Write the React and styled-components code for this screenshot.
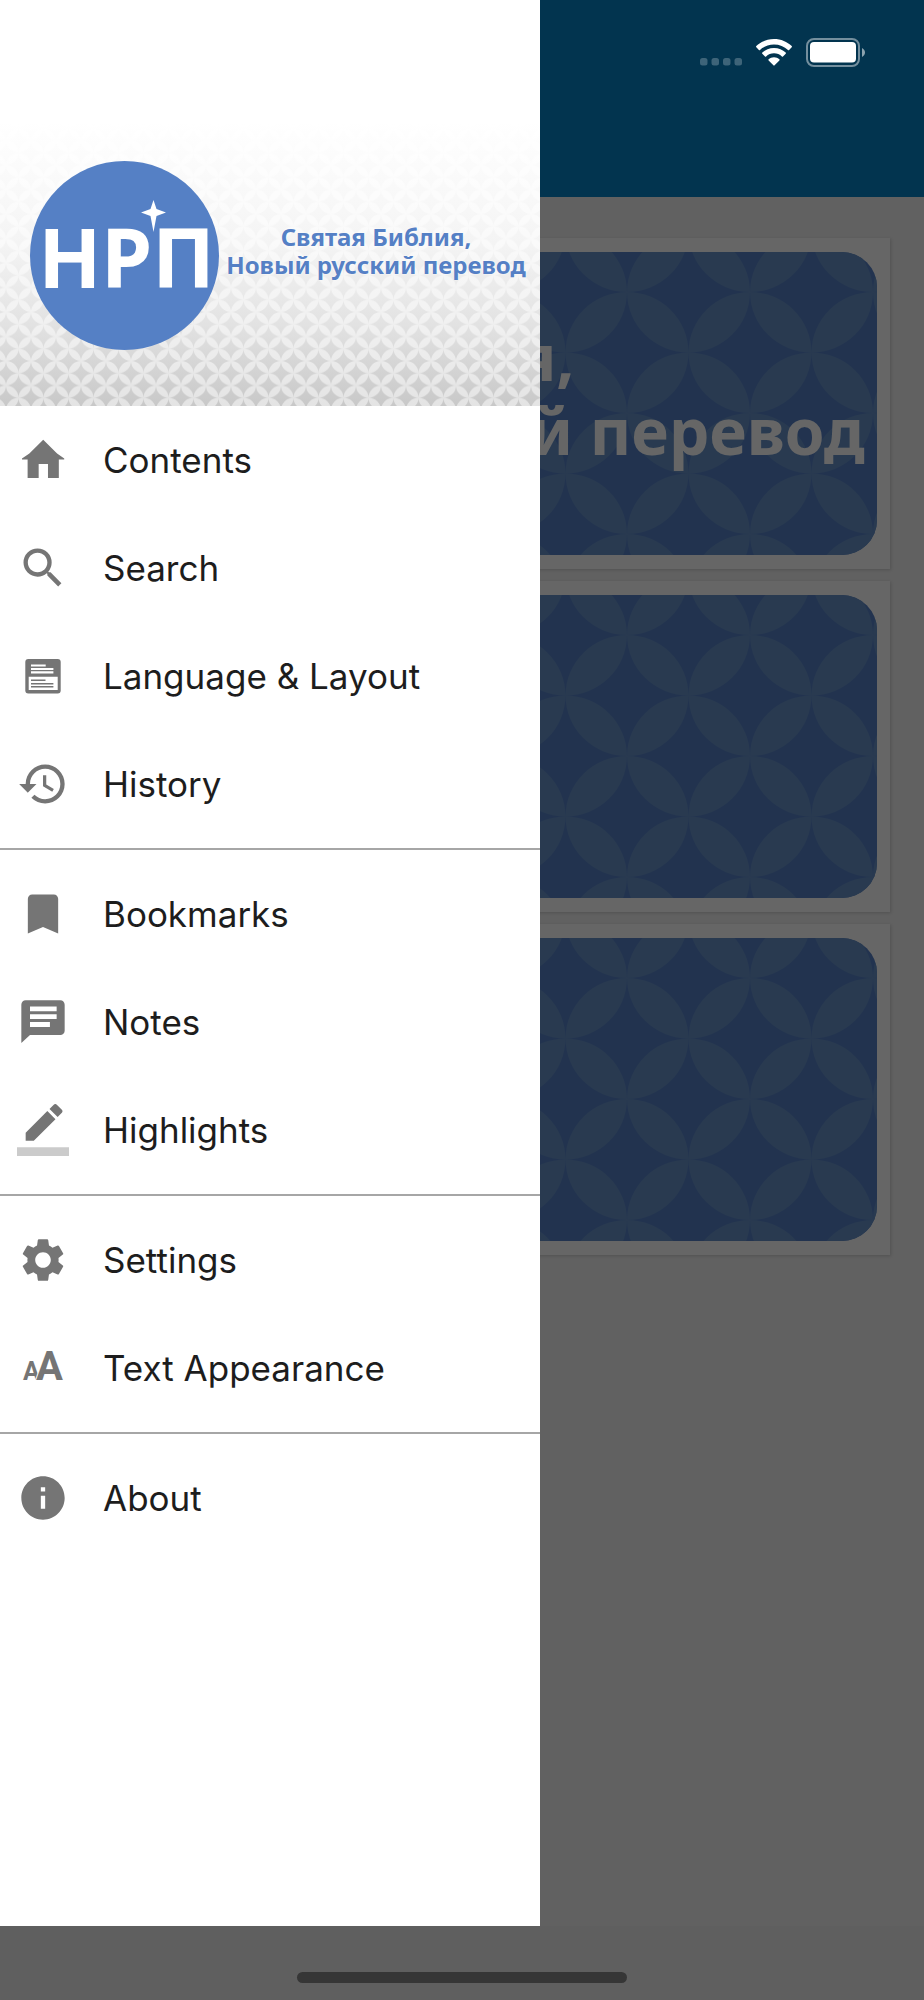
import React from "react";
import styled, { createGlobalStyle } from "styled-components";
import {
  MdBookmark,
  MdHistory,
  MdInfo,
  MdSearch,
  MdSettings,
} from "react-icons/md";

const color_brand = "#5580c5";
const color_icon = "#757575";
const font_ui = `Inter, Roboto, "Liberation Sans", sans-serif`;
const font_title = `"Noto Sans", "Open Sans", sans-serif`;

const GlobalStyle = createGlobalStyle`
  *, *::before, *::after {
    box-sizing: border-box;
  }

  body {
    margin: 0;
    font-family: ${font_ui};
  }
`;

const Screen = styled.div`
  position: relative;
  display: flex;
  flex-direction: column;
  min-height: 100vh;
  overflow: hidden;
  background-color: #f2f2f2;
`;

const AppHeader = styled.header`
  height: 197px;
  background-color: #0582c6;
`;

const StatusBar = styled.div`
  position: relative;
  z-index: 2;
  display: flex;
  justify-content: flex-end;
  align-items: flex-end;
  gap: 14px;
  padding: 38px 58px 0 0;
`;

const Shelf = styled.main`
  flex: 1;
  display: flex;
  flex-direction: column;
  gap: 12px;
  padding: 41px 34px;
`;

const Card = styled.article`
  padding: 14px 13px;
  background-color: #fff;
  box-shadow: 1px 1px 3px rgba(0, 0, 0, 0.16);
`;

const Cover = styled.div`
  position: relative;
  display: flex;
  align-items: center;
  height: 303px;
  padding: 0 0 20px 19px;
  border-radius: 35px;
  overflow: hidden;
  background-color: ${color_brand};
`;

const CoverTitle = styled.h2`
  position: relative;
  margin: 0;
  color: #fff;
  font-family: ${font_title};
  font-size: 64px;
  font-weight: 700;
  line-height: 74px;
  white-space: nowrap;
`;

const PatternLayer = styled.svg`
  position: absolute;
  inset: 0;
  width: 100%;
  height: 100%;
`;

const HomeArea = styled.footer`
  display: flex;
  justify-content: center;
  height: 74px;
  padding-top: 46px;
  background-color: #eee;
`;

const HomeIndicator = styled.div`
  width: 330px;
  height: 11px;
  border-radius: 6px;
  background-color: #878787;
`;

const Scrim = styled.div`
  position: absolute;
  inset: 0;
  z-index: 1;
  background-color: rgba(0, 0, 0, 0.6);
`;

const Drawer = styled.aside`
  position: absolute;
  top: 0;
  bottom: 74px;
  left: 0;
  z-index: 3;
  width: 540px;
  max-width: 85vw;
  background-color: #fff;
`;

const Banner = styled.div`
  position: relative;
  display: flex;
  align-items: center;
  padding: 161px 7px 56px 30px;
  background: linear-gradient(
    to bottom,
    #fff 30%,
    #f4f4f4 60%,
    #e2e2e2 80%,
    #c8c8c8 100%
  );
`;

const Logo = styled.div`
  position: relative;
  flex-shrink: 0;
  display: flex;
  align-items: center;
  justify-content: center;
  width: 189px;
  height: 189px;
  padding-left: 4px;
  border-radius: 50%;
  background-color: ${color_brand};
  color: #fff;
  font-family: ${font_title};
  font-size: 82px;
  font-weight: 700;
`;

const LogoStar = styled.svg`
  position: absolute;
  top: 39px;
  left: 111px;
  width: 25px;
  height: 32px;
  fill: #fff;
`;

const BannerTitle = styled.h1`
  position: relative;
  flex: 1;
  margin: 0;
  padding-bottom: 10px;
  color: ${color_brand};
  font-family: ${font_title};
  font-size: 24px;
  font-weight: 700;
  line-height: 28px;
  text-align: center;
  text-shadow: 0 0 2px #fff;
  white-space: nowrap;
`;

const MenuGroup = styled.ul`
  margin: 0;
  padding: 0 0 10px;
  list-style: none;

  & + & {
    padding-top: 10px;
    border-top: 2px solid #a6a6a6;
  }
`;

const MenuButton = styled.button`
  display: flex;
  align-items: center;
  gap: 34px;
  width: 100%;
  height: 108px;
  padding: 0 17px;
  border: 0;
  background: none;
  color: #1d1d1d;
  font-family: ${font_ui};
  font-size: 35px;
  text-align: left;
  cursor: pointer;

  svg {
    flex-shrink: 0;
    width: 52px;
    height: 52px;
    fill: ${color_icon};
  }
`;

// interlocking petals, one tile holds four of them around its center
const Petals = ({ id, width, height, x, y, fill, opacity }) => {
  const rx = width / 2;
  const ry = height / 2;
  const petal = (x1, y1, x2, y2) =>
    `M${x1} ${y1}A${rx} ${ry} 0 0 1 ${x2} ${y2}A${rx} ${ry} 0 0 1 ${x1} ${y1}Z`;

  return (
    <PatternLayer aria-hidden="true">
      <defs>
        <pattern
          id={id}
          x={x}
          y={y}
          width={width}
          height={height}
          patternUnits="userSpaceOnUse"
        >
          <path
            fill={fill}
            fillOpacity={opacity}
            d={
              petal(0, 0, rx, ry) +
              petal(width, 0, rx, ry) +
              petal(0, height, rx, ry) +
              petal(width, height, rx, ry)
            }
          />
        </pattern>
      </defs>
      <rect width="100%" height="100%" fill={`url(#${id})`} />
    </PatternLayer>
  );
};

const SignalIcon = () => (
  <svg width="42" height="28" fill="#fff" fillOpacity="0.24" aria-hidden="true">
    <rect x="0" y="19" width="7.500" height="7.500" rx="2.500" />
    <rect x="11.500" y="19" width="7.500" height="7.500" rx="2.500" />
    <rect x="23" y="19" width="7.500" height="7.500" rx="2.500" />
    <rect x="34.500" y="19" width="7.500" height="7.500" rx="2.500" />
  </svg>
);

const WifiIcon = () => (
  <svg width="36" height="28" viewBox="0 0 36 28" fill="#fff" aria-hidden="true">
    <path d="M18 0C11 0 4.800 2.700.3 7.100a.8.8 0 0 0 0 1.100l2.600 2.700a.8.800 0 0 0 1.100 0C7.700 7.400 12.600 5.400 18 5.400s10.300 2 14 5.500a.8.8 0 0 0 1.100 0l2.600-2.700a.8.8 0 0 0 0-1.100C31.200 2.700 25 0 18 0Z" />
    <path d="M18 9c-4.600 0-8.700 1.700-11.700 4.600a.8.8 0 0 0 0 1.100l2.700 2.700a.8.8 0 0 0 1.100 0c2.100-1.900 4.900-3.100 7.900-3.100s5.800 1.200 7.900 3.100a.8.8 0 0 0 1.100 0l2.700-2.700a.8.8 0 0 0 0-1.100C26.700 10.700 22.600 9 18 9Z" />
    <path d="M18 18.300c-2.100 0-4 .7-5.400 2a.8.8 0 0 0 0 1.100l4.800 4.900a.8.8 0 0 0 1.200 0l4.800-4.900a.8.8 0 0 0 0-1.100c-1.400-1.300-3.300-2-5.400-2Z" />
  </svg>
);

const BatteryIcon = () => (
  <svg width="60" height="29" viewBox="0 0 60 29" aria-hidden="true">
    <rect
      x="1"
      y="1"
      width="52"
      height="27"
      rx="7"
      fill="none"
      stroke="#fff"
      strokeOpacity="0.45"
      strokeWidth="2"
    />
    <rect x="4" y="4" width="46" height="20.500" rx="4" fill="#fff" />
    <path d="M56 10c4 2 4 7 0 9Z" fill="#fff" fillOpacity="0.55" />
  </svg>
);

const HomeIcon = () => (
  <svg viewBox="0 0 24 24" aria-hidden="true">
    <path d="M12.100 2.700 18.500 9l3.300 2.300v.5h-2.500v8.500h-5v-6.500H10v6.500H4.900v-8.500H2.300v-.5L5.700 9Z" />
  </svg>
);

const LayoutIcon = () => (
  <svg viewBox="0 0 52 52" aria-hidden="true">
    <rect x="8.300" y="9" width="35.400" height="34.400" rx="3" />
    <path
      fill="#fff"
      d="M14 14.500h14.700v2H14zM14 18h22.400v2H14zM14 21.300h22.400v2.200H14zM11.700 26.700h29V40h-29z"
    />
    <path d="M14 29.500h14.500v1.500H14zM14 33h22.400v1.500H14zM14 36h22.400v1.500H14z" />
  </svg>
);

const NotesIcon = () => (
  <svg viewBox="0 0 24 24" aria-hidden="true">
    <path d="M20 2H4c-1.100 0-2 .9-2 2v17.700L6 18h14c1.100 0 2-.9 2-2V4c0-1.100-.9-2-2-2ZM6 12h9.200v2.300H6Zm0-3.600h12.300v2.200H6Zm0-3.600h12.300V7H6Z" />
  </svg>
);

const HighlightIcon = () => (
  <svg viewBox="0 0 24 24" aria-hidden="true">
    <path d="M17.750 7 14 3.250l-10 10V17h3.750l10-10Zm2.960-2.960c.39-.39.39-1.020 0-1.410L18.370.29c-.39-.39-1.020-.39-1.410 0L15 2.250 18.750 6l1.960-1.960Z" />
    <path fill="#cbcbcb" d="M0 20h24v4H0z" />
  </svg>
);

const TextSizeIcon = () => (
  <svg
    viewBox="0 0 52 52"
    fontFamily="Roboto, sans-serif"
    fontWeight="700"
    aria-hidden="true"
  >
    <text x="6" y="38" fontSize="25">
      A
    </text>
    <text
      x="19"
      y="38"
      fontSize="40"
      stroke="#fff"
      strokeWidth="2"
      paintOrder="stroke"
    >
      A
    </text>
  </svg>
);

const menu = [
  [
    { label: "Contents", Icon: HomeIcon },
    { label: "Search", Icon: MdSearch },
    { label: "Language & Layout", Icon: LayoutIcon },
    { label: "History", Icon: MdHistory },
  ],
  [
    { label: "Bookmarks", Icon: MdBookmark },
    { label: "Notes", Icon: NotesIcon },
    { label: "Highlights", Icon: HighlightIcon },
  ],
  [
    { label: "Settings", Icon: MdSettings },
    { label: "Text Appearance", Icon: TextSizeIcon },
  ],
  [{ label: "About", Icon: MdInfo }],
];

const BookCard = ({ id, children }) => (
  <Card>
    <Cover>
      <Petals id={id} width={123} height={121} x={88} y={40} fill="#6691c8" />
      {children && <CoverTitle>{children}</CoverTitle>}
    </Cover>
  </Card>
);

const App = () => (
  <>
    <GlobalStyle />
    <Screen>
      <AppHeader>
        <StatusBar>
          <SignalIcon />
          <WifiIcon />
          <BatteryIcon />
        </StatusBar>
      </AppHeader>
      <Shelf>
        <BookCard id="cover-1">
          Святая Библия,
          <br />
          Новый русский перевод
        </BookCard>
        <BookCard id="cover-2" />
        <BookCard id="cover-3" />
      </Shelf>
      <HomeArea>
        <HomeIndicator />
      </HomeArea>
      <Scrim />
      <Drawer>
        <Banner>
          <Petals
            id="banner"
            width={25}
            height={24.5}
            x={6}
            y={18}
            fill="#fff"
            opacity={0.5}
          />
          <Logo>
            НРП
            <LogoStar viewBox="0 0 25 32" aria-hidden="true">
              <path d="M12.500 0 15.500 9 25 12.500 15.500 16 12.500 32 9.500 16 0 12.500 9.500 9Z" />
            </LogoStar>
          </Logo>
          <BannerTitle>
            Святая Библия,
            <br />
            Новый русский перевод
          </BannerTitle>
        </Banner>
        <nav aria-label="Main menu">
          {menu.map((group) => (
            <MenuGroup key={group[0].label}>
              {group.map(({ label, Icon }) => (
                <li key={label}>
                  <MenuButton type="button">
                    <Icon />
                    {label}
                  </MenuButton>
                </li>
              ))}
            </MenuGroup>
          ))}
        </nav>
      </Drawer>
    </Screen>
  </>
);

export default App;
